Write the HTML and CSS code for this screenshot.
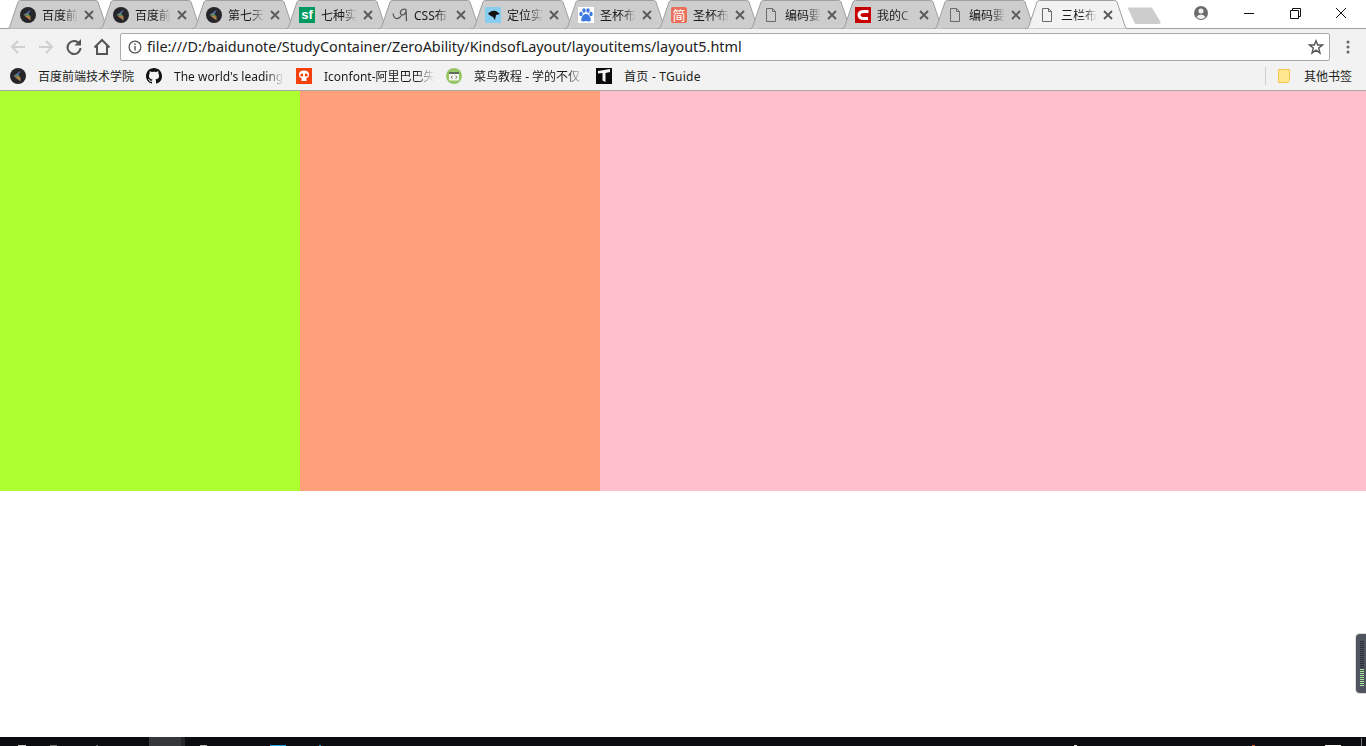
FILE: index.html
```html
<!DOCTYPE html>
<html lang="zh-CN">
<head>
    <meta charset="UTF-8">
    <meta name="viewport" content="width=device-width, initial-scale=1.0">
    <title>三栏布局</title>
    <link rel="stylesheet" href="styles.css">
</head>
<body>
    <svg class="defs" width="0" height="0">
        <defs>
            <symbol id="tab-shape" viewBox="0 0 104 29">
                <path d="M0 28.5H1.5Q3 28.5 3.6 27L12 2Q12.6 .5 14.5 .5H89.5Q91.4 .5 92 2L100.400 27Q101 28.5 102.500 28.5H104"/>
            </symbol>
            <symbol id="close" viewBox="0 0 10 10">
                <path d="M1 1L9 9M9 1L1 9" fill="none" stroke="#5a5a5a" stroke-width="1.800"/>
            </symbol>
            <symbol id="doc" viewBox="0 0 16 16">
                <path d="M3.500 1.500H9.500L12.500 4.500V14.500H3.500ZM9.500 1.500V4.500H12.500" fill="none" stroke="#6a6a6a"/>
            </symbol>
            <symbol id="bfe" viewBox="0 0 16 16">
                <circle cx="8" cy="8" r="8" fill="#26262a"/>
                <path d="M11 2.500L3.500 8L7 8.500L9 6Z" fill="#5a6fa8"/>
                <path d="M3.500 8L7 8.500L10.500 9.500L8 6.500Z" fill="#5f9a62"/>
                <path d="M4 8.500L10.500 13.500L10.500 9.500L7 8.500Z" fill="#b0814a"/>
            </symbol>
        </defs>
    </svg>

    <header class="chrome">
        <div class="tabstrip">
            <div class="tab">
                <svg class="tab-bg"><use href="#tab-shape"/></svg>
                <svg class="fav"><use href="#bfe"/></svg>
                <span class="tab-title">百度前</span>
                <svg class="tab-close"><use href="#close"/></svg>
            </div>
            <div class="tab">
                <svg class="tab-bg"><use href="#tab-shape"/></svg>
                <svg class="fav"><use href="#bfe"/></svg>
                <span class="tab-title">百度前</span>
                <svg class="tab-close"><use href="#close"/></svg>
            </div>
            <div class="tab">
                <svg class="tab-bg"><use href="#tab-shape"/></svg>
                <svg class="fav"><use href="#bfe"/></svg>
                <span class="tab-title">第七天</span>
                <svg class="tab-close"><use href="#close"/></svg>
            </div>
            <div class="tab">
                <svg class="tab-bg"><use href="#tab-shape"/></svg>
                <span class="fav fav-sf">sf</span>
                <span class="tab-title">七种实</span>
                <svg class="tab-close"><use href="#close"/></svg>
            </div>
            <div class="tab">
                <svg class="tab-bg"><use href="#tab-shape"/></svg>
                <svg class="fav" viewBox="0 0 16 16"><path d="M1 6.500Q2 12 5.500 11.500Q8 11 9.500 8.500M14.500 2.500Q10 1 8.500 4.500Q8 8 11 8Q14 7 14 3L14.500 14" fill="none" stroke="#555" stroke-width="1.300"/></svg>
                <span class="tab-title">CSS布</span>
                <svg class="tab-close"><use href="#close"/></svg>
            </div>
            <div class="tab">
                <svg class="tab-bg"><use href="#tab-shape"/></svg>
                <svg class="fav" viewBox="0 0 16 16"><rect width="16" height="16" fill="#87cdf0"/><path d="M3 7Q6 3 11 4L15 7L11 8L10 13L8 10L6 9Z" fill="#111"/></svg>
                <span class="tab-title">定位实</span>
                <svg class="tab-close"><use href="#close"/></svg>
            </div>
            <div class="tab">
                <svg class="tab-bg"><use href="#tab-shape"/></svg>
                <svg class="fav" viewBox="0 0 16 16"><rect width="16" height="16" fill="#fff"/><g fill="#3b78e0"><ellipse cx="3" cy="7" rx="1.700" ry="2.200"/><ellipse cx="6" cy="3.500" rx="1.700" ry="2.300"/><ellipse cx="10" cy="3.500" rx="1.700" ry="2.300"/><ellipse cx="13" cy="7" rx="1.700" ry="2.200"/><path d="M8 7Q11 7 12.500 11Q13.500 15 10.500 14.500L8 14L5.500 14.500Q2.500 15 3.500 11Q5 7 8 7Z"/></g></svg>
                <span class="tab-title">圣杯布</span>
                <svg class="tab-close"><use href="#close"/></svg>
            </div>
            <div class="tab">
                <svg class="tab-bg"><use href="#tab-shape"/></svg>
                <span class="fav fav-jian">简</span>
                <span class="tab-title">圣杯布</span>
                <svg class="tab-close"><use href="#close"/></svg>
            </div>
            <div class="tab">
                <svg class="tab-bg"><use href="#tab-shape"/></svg>
                <svg class="fav"><use href="#doc"/></svg>
                <span class="tab-title">编码要</span>
                <svg class="tab-close"><use href="#close"/></svg>
            </div>
            <div class="tab">
                <svg class="tab-bg"><use href="#tab-shape"/></svg>
                <svg class="fav" viewBox="0 0 16 16"><rect width="16" height="16" fill="#c90000"/><path d="M13.500 4.500H9Q4 4.500 4 8T9 11.500H13" fill="none" stroke="#fff" stroke-width="3"/></svg>
                <span class="tab-title">我的C</span>
                <svg class="tab-close"><use href="#close"/></svg>
            </div>
            <div class="tab">
                <svg class="tab-bg"><use href="#tab-shape"/></svg>
                <svg class="fav"><use href="#doc"/></svg>
                <span class="tab-title">编码要</span>
                <svg class="tab-close"><use href="#close"/></svg>
            </div>
            <div class="tab tab-active">
                <svg class="tab-bg"><use href="#tab-shape"/></svg>
                <svg class="fav"><use href="#doc"/></svg>
                <span class="tab-title">三栏布</span>
                <svg class="tab-close"><use href="#close"/></svg>
            </div>
            <svg class="new-tab" viewBox="0 0 34 18"><path d="M1 1.500Q1 .5 2 .5H24Q25 .5 25.500 1.500L33.500 15Q34 17 32 17H9Q8 17 7.500 16Z"/></svg>

            <div class="win-controls">
                <svg class="win-user" viewBox="0 0 16 16"><circle cx="8" cy="8" r="7" fill="#6b6b6b"/><circle cx="8" cy="6" r="2.500" fill="#f2f2f2"/><path d="M3.500 12Q5 9.500 8 9.500T12.500 12Q10.500 14 8 14T3.500 12Z" fill="#f2f2f2"/></svg>
                <svg class="win-btn" viewBox="0 0 46 16"><path d="M18 8.500H28" stroke="#111"/></svg>
                <svg class="win-btn" viewBox="0 0 46 16"><path d="M18.500 5.500H26.500V13.500H18.500ZM20.500 5.500V3.500H28.500V11.500H26.500" fill="none" stroke="#111"/></svg>
                <svg class="win-btn" viewBox="0 0 46 16"><path d="M18 3L28 13M28 3L18 13" fill="none" stroke="#111"/></svg>
            </div>
        </div>

        <div class="toolbar">
            <svg class="nav-btn" viewBox="0 0 28 28"><path d="M21 14H8M14 8L8 14L14 20" fill="none" stroke="#cfcfcf" stroke-width="2"/></svg>
            <svg class="nav-btn" viewBox="0 0 28 28"><path d="M7 14H20M14 8L20 14L14 20" fill="none" stroke="#cfcfcf" stroke-width="2"/></svg>
            <svg class="nav-btn" viewBox="0 0 28 28"><path d="M19.500 11A6.500 6.500 0 1 0 20.500 15" fill="none" stroke="#555" stroke-width="2"/><path d="M21 6V12.500H14.500Z" fill="#555"/></svg>
            <svg class="nav-btn" viewBox="0 0 28 28"><path d="M6.500 14.500L14 7L21.500 14.500M9 13V21H19V13" fill="none" stroke="#555" stroke-width="2"/></svg>
            <div class="omnibox">
                <svg class="omni-info" viewBox="0 0 14 14"><circle cx="7" cy="7" r="5.900" fill="none" stroke="#555" stroke-width="1.300"/><path d="M7 6V10.500M7 3.500V5" stroke="#555" stroke-width="1.400"/></svg>
                <span class="omni-url">file:///D:/baidunote/StudyContainer/ZeroAbility/KindsofLayout/layoutitems/layout5.html</span>
                <svg class="omni-star" viewBox="0 0 16 16"><path d="M8 1.800L9.700 6H14.500L10.700 9L12 14L8 11.200L4 14L5.300 9L1.500 6H6.300Z" fill="none" stroke="#555" stroke-width="1.400"/></svg>
            </div>
            <svg class="menu-btn" viewBox="0 0 36 28"><g fill="#666"><circle cx="18" cy="9" r="1.500"/><circle cx="18" cy="14" r="1.500"/><circle cx="18" cy="19" r="1.500"/></g></svg>
        </div>

        <div class="bookmarks">
            <div class="bm">
                <svg class="fav"><use href="#bfe"/></svg>
                <span class="bm-title">百度前端技术学院</span>
            </div>
            <div class="bm">
                <svg class="fav" viewBox="0 0 16 16"><path fill="#111" d="M8 0C3.580 0 0 3.580 0 8c0 3.540 2.290 6.530 5.470 7.590.4.070.55-.17.55-.38 0-.19-.01-.82-.01-1.490-2.010.37-2.530-.49-2.690-.94-.09-.23-.48-.94-.82-1.130-.28-.15-.68-.52-.01-.53.63-.01 1.080.58 1.230.82.72 1.210 1.870.87 2.330.66.070-.52.28-.87.510-1.070-1.780-.2-3.640-.89-3.640-3.950 0-.87.310-1.590.82-2.150-.08-.2-.36-1.020.08-2.120 0 0 .67-.21 2.200.82.64-.18 1.320-.27 2-.27s1.360.09 2 .27c1.530-1.040 2.200-.82 2.200-.82.44 1.100.16 1.920.08 2.120.51.56.82 1.270.82 2.150 0 3.070-1.870 3.750-3.650 3.950.29.25.54.73.54 1.480 0 1.070-.01 1.930-.01 2.200 0 .21.15.46.55.38A8.010 8.010 0 0 0 16 8c0-4.420-3.580-8-8-8z"/></svg>
                <span class="bm-title bm-fade">The world's leading</span>
            </div>
            <div class="bm">
                <svg class="fav" viewBox="0 0 16 16"><rect width="16" height="16" fill="#f4400a"/><path d="M8 2.500Q13.500 2.500 13 7.500Q12.800 9.500 10.500 10V13H5.500V10Q3.200 9.500 3 7.500Q2.500 2.500 8 2.500Z" fill="#fff"/><circle cx="5.800" cy="7" r="1.500" fill="#f4400a"/><circle cx="10.200" cy="7" r="1.500" fill="#f4400a"/></svg>
                <span class="bm-title bm-fade">Iconfont-阿里巴巴失</span>
            </div>
            <div class="bm">
                <svg class="fav" viewBox="0 0 16 16"><circle cx="8" cy="8" r="8" fill="#96c564"/><rect x="3" y="4" width="10" height="8.500" rx="1" fill="#f4f4ee"/><rect x="3" y="4" width="10" height="2" fill="#5d6d5a"/><path d="M6.500 8L5 9.300L6.500 10.500M9.500 8L11 9.300L9.500 10.500" fill="none" stroke="#5d6d5a"/></svg>
                <span class="bm-title bm-fade">菜鸟教程 - 学的不仅</span>
            </div>
            <div class="bm">
                <svg class="fav" viewBox="0 0 16 16"><rect width="16" height="16" fill="#0a0a0a"/><path d="M2 3L14 1V4L9.500 5V14L6.500 12.500V5L2 5.500Z" fill="#f4f4f4"/></svg>
                <span class="bm-title bm-tguide">首页 - TGuide</span>
            </div>
            <div class="bm-other">
                <svg class="bm-folder" viewBox="0 0 12 14"><path d="M.5 .5H11.500V11.500L10 13.500H.5Z" fill="#ffe68f" stroke="#f0c94e"/></svg>
                <span class="bm-title">其他书签</span>
            </div>
        </div>
    </header>

    <main class="columns">
        <div class="col col-left"></div>
        <div class="col col-center"></div>
        <div class="col col-right"></div>
    </main>

    <div class="page-rest"></div>

    <div class="meter">
        <div class="meter-bars meter-dark"></div>
        <div class="meter-bars meter-lit"></div>
    </div>

    <footer class="taskbar">
        <svg width="1366" height="9" viewBox="0 0 1366 9">
            <rect x="149" width="32" height="9" fill="#35383a"/>
            <rect x="181" width="4" height="9" fill="#24272a"/>
            <rect x="18" y="8" width="8" height="1" fill="#d0d0d0"/>
            <rect x="50" y="8" width="7" height="1" fill="#777"/>
            <rect x="96" y="8" width="2" height="1" fill="#666"/>
            <rect x="200" y="8" width="7" height="1" fill="#bbb"/>
            <rect x="270" y="8" width="16" height="1" fill="#2aa4ea"/>
            <rect x="319" y="8" width="2" height="1" fill="#2a8fc8"/>
            <rect x="1074" y="8" width="3" height="1" fill="#e8e8e8"/>
            <rect x="1252" y="8" width="3" height="1" fill="#d9541a"/>
            <rect x="1325" y="8" width="16" height="1" fill="#fff"/>
            <rect x="1361" y="1" width="1" height="8" fill="#777"/>
        </svg>
    </footer>
</body>
</html>
```

FILE: styles.css
```css
html, body {
    margin: 0;
    height: 100%;
}

body {
    display: flex;
    flex-direction: column;
    height: 746px;
    overflow: hidden;
    position: relative;
    background: #fff;
    font-family: "Noto Sans", "Noto Sans CJK SC", sans-serif;
    font-size: 12px;
    color: #1a1a1a;
}

.defs {
    position: absolute;
}

/* tabs */
.tabstrip {
    display: flex;
    align-items: flex-start;
    height: 29px;
    padding-left: 6px;
    background: linear-gradient(#fff 28px, #a0a0a0 28px);
}

.tab {
    position: relative;
    flex: none;
    display: flex;
    align-items: center;
    box-sizing: border-box;
    width: 104px;
    height: 29px;
    margin-right: -11px;
    padding: 0 0 0 14px;
}

.tab:nth-child(n+8) {
    margin-right: -12px;
}

.tab-bg {
    position: absolute;
    left: 0;
    top: 0;
    width: 104px;
    height: 29px;
    fill: #cdcdcd;
    stroke: #a0a0a0;
}

.tab-active {
    z-index: 2;
}

.tab-active .tab-bg {
    fill: #f2f2f2;
}

.fav {
    position: relative;
    flex: none;
    display: block;
    width: 16px;
    height: 16px;
}

.fav-sf {
    background: #009a61;
    color: #fff;
    font: bold 13px/15px "Liberation Sans", sans-serif;
    text-align: center;
}

.fav-jian {
    background: #ea6f5a;
    border-radius: 2px;
    color: #fff;
    font: 13px/16px "Noto Sans CJK SC", sans-serif;
    text-align: center;
}

.tab-title {
    position: relative;
    flex: none;
    width: 36px;
    margin-left: 6px;
    white-space: nowrap;
    overflow: hidden;
    -webkit-mask-image: linear-gradient(to right, #000 22px, transparent 36px);
    mask-image: linear-gradient(to right, #000 22px, transparent 36px);
}

.tab-close {
    position: relative;
    flex: none;
    width: 10px;
    height: 10px;
    margin-left: 6px;
}

.new-tab {
    flex: none;
    width: 34px;
    height: 18px;
    margin: 7px 0 0 10px;
    fill: #cdcdcd;
}

.win-controls {
    display: flex;
    align-items: center;
    margin-left: auto;
    padding-right: 2px;
    height: 26px;
}

.win-user {
    width: 16px;
    height: 16px;
    margin-right: 17px;
}

.win-btn {
    width: 46px;
    height: 16px;
}

/* toolbar */
.toolbar {
    display: flex;
    align-items: center;
    box-sizing: border-box;
    height: 37px;
    padding: 0 0 1px 4px;
    background: #f2f2f2;
}

.nav-btn {
    flex: none;
    width: 28px;
    height: 28px;
}

.omnibox {
    flex: 1;
    display: flex;
    align-items: center;
    box-sizing: border-box;
    height: 28px;
    margin-left: 4px;
    padding: 0 5px 0 7px;
    background: #fff;
    border: 1px solid #a9a9a9;
    border-radius: 2px;
}

.omni-info {
    flex: none;
    width: 14px;
    height: 14px;
}

.omni-url {
    flex: 1;
    margin-left: 5px;
    padding-bottom: 2px;
    font-size: 14.4px;
    color: #222;
    white-space: nowrap;
}

.omni-star {
    flex: none;
    width: 16px;
    height: 16px;
}

.menu-btn {
    flex: none;
    width: 36px;
    height: 28px;
}

/* bookmarks */
.bookmarks {
    display: flex;
    align-items: center;
    gap: 12px;
    box-sizing: border-box;
    height: 25px;
    padding: 0 14px 4px 10px;
    background: #f2f2f2;
    border-bottom: 1px solid #a8a8a8;
}

.bm {
    display: flex;
    align-items: center;
    gap: 12px;
}

.bm-title {
    white-space: nowrap;
}

.bm-fade {
    width: 110px;
    -webkit-mask-image: linear-gradient(to right, #000 92px, transparent 110px);
    mask-image: linear-gradient(to right, #000 92px, transparent 110px);
}

.bm-tguide {
    letter-spacing: .25px;
}

.bm-other {
    display: flex;
    align-items: center;
    gap: 14px;
    margin-left: auto;
    padding-left: 12px;
    border-left: 1px solid #cfcfcf;
}

.bm-folder {
    width: 12px;
    height: 14px;
}

/* page */
.columns {
    display: flex;
    height: 400px;
}

.col {
    width: 300px;
}

.col-left {
    background: #adff2f;
}

.col-center {
    background: #ffa07a;
}

.col-right {
    flex: 1;
    background: #ffc0cb;
}

.page-rest {
    flex: 1;
    background: #fff;
}

/* floating meter at the right edge */
.meter {
    position: absolute;
    right: 0;
    top: 634px;
    box-sizing: border-box;
    width: 10px;
    height: 59px;
    padding: 7px 2px 0 4px;
    background: #50545f;
    border-radius: 3px 0 0 3px;
    outline: 1px solid #dcdcdc;
}

.meter-bars {
    background-size: 100% 2px;
}

.meter-dark {
    height: 28px;
    background-image: linear-gradient(#2b2e36 1px, transparent 1px);
}

.meter-lit {
    height: 18px;
    background-image: linear-gradient(#a8e6a0 1px, transparent 1px);
}

.taskbar {
    flex: none;
    height: 9px;
    background: #0a0c0e;
}

.taskbar svg {
    display: block;
}
```
